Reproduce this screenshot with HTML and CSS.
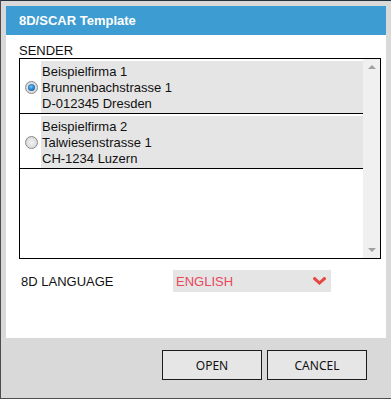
FILE: index.html
```html
<!DOCTYPE html>
<html>
<head>
<meta charset="utf-8">
<link rel="stylesheet" href="styles.css">
</head>
<body>
<div class="window">
  <div class="dialog">
    <div class="titlebar">8D/SCAR Template</div>
    <div class="content">
      <div class="label">SENDER</div>
      <div class="listbox">
        <div class="items">
          <div class="item">
            <div class="radio-col"><span class="radio checked"></span></div>
            <div class="addr">Beispielfirma 1<br>Brunnenbachstrasse 1<br>D-012345 Dresden</div>
          </div>
          <div class="item">
            <div class="radio-col"><span class="radio"></span></div>
            <div class="addr">Beispielfirma 2<br>Talwiesenstrasse 1<br>CH-1234 Luzern</div>
          </div>
        </div>
        <div class="scrollbar">
          <span class="arrow up"></span>
          <span class="arrow down"></span>
        </div>
      </div>
      <div class="langrow">
        <span class="langlabel">8D LANGUAGE</span>
        <div class="select">
          <span class="seltext">ENGLISH</span>
          <svg class="chev" width="13" height="8" viewBox="0 0 13 8"><path d="M1.6 1.6 L6.5 6 L11.4 1.6" fill="none" stroke="#e5483f" stroke-width="3" stroke-linecap="square"/></svg>
        </div>
      </div>
    </div>
    <div class="footer">
      <button class="btn">OPEN</button>
      <button class="btn">CANCEL</button>
    </div>
  </div>
</div>
</body>
</html>
```
FILE: styles.css
```css
* { box-sizing: border-box; }
html, body { margin: 0; padding: 0; }
body {
  width: 391px;
  height: 399px;
  overflow: hidden;
  font-family: "Liberation Sans", Arial, sans-serif;
  font-size: 13px;
  color: #111;
}
.window {
  width: 391px;
  height: 399px;
  background: #d9d9d9;
  border-top: 1px solid #26323b;
  border-left: 1px solid #4d4d4d;
  border-bottom: 1px solid #4d4d4d;
  padding: 5px 5px 0 5px;
}
.dialog {
  display: flex;
  flex-direction: column;
}
.titlebar {
  height: 29px;
  line-height: 29px;
  background: #3d9dd2;
  color: #fff;
  font-weight: bold;
  font-size: 13px;
  padding-left: 13px;
}
.content {
  height: 303px;
  background: #fff;
  padding: 8px 5px 0 13px;
}
.label {
  line-height: 15px;
  height: 15px;
}
.listbox {
  height: 201px;
  border: 1px solid #000;
  display: flex;
}
.items {
  flex: 1;
}
.item {
  display: flex;
  padding-top: 2px;
  border-bottom: 1px solid #000;
}
.radio-col {
  width: 21px;
  display: flex;
  align-items: center;
  justify-content: center;
  padding-left: 1px;
}
.radio {
  width: 13px;
  height: 13px;
  border-radius: 50%;
  border: 1px solid #8a8a8a;
  background: radial-gradient(circle at 50% 50%, #f2f2f2 0%, #e0e0e0 55%, #c8c8c8 100%);
  display: flex;
  align-items: center;
  justify-content: center;
}
.radio.checked::after {
  content: "";
  width: 7px;
  height: 7px;
  border-radius: 50%;
  background: radial-gradient(circle at 45% 40%, #7cc8f5 0%, #2a86cf 45%, #0f4580 100%);
}
.addr {
  flex: 1;
  background: #e5e5e5;
  line-height: 16px;
  padding: 3px 0 1px 1px;
}
.scrollbar {
  width: 17px;
  background: #f0f0f0;
  display: flex;
  flex-direction: column;
  justify-content: space-between;
  align-items: center;
  padding: 6px 0 6px 1px;
}
.arrow {
  width: 0;
  height: 0;
  border-left: 4px solid transparent;
  border-right: 4px solid transparent;
}
.arrow.up { border-bottom: 4px solid #a0a0a0; }
.arrow.down { border-top: 4px solid #a0a0a0; }
.langrow {
  margin-top: 11px;
  display: flex;
  height: 22px;
}
.langlabel {
  width: 154px;
  padding-left: 2px;
  padding-top: 2px;
  line-height: 20px;
}
.select {
  width: 158px;
  height: 22px;
  background: #e5e5e5;
  display: flex;
  justify-content: space-between;
  align-items: center;
  padding: 0 5px 0 3px;
}
.seltext {
  color: #e8475a;
  line-height: 20px;
  padding-top: 2px;
}
.chev { display: block; margin-top: -1px; }
.footer {
  height: 60px;
  display: flex;
  justify-content: flex-end;
  gap: 5px;
  padding: 12px 19px 0 0;
}
.btn {
  width: 100px;
  height: 30px;
  border: 1px solid #1c1c1c;
  background: #e6e6e6;
  font-family: "Noto Sans", "Open Sans", sans-serif;
  font-size: 12px;
  color: #111;
  padding: 0;
  margin: 0;
  border-radius: 0;
}
```
